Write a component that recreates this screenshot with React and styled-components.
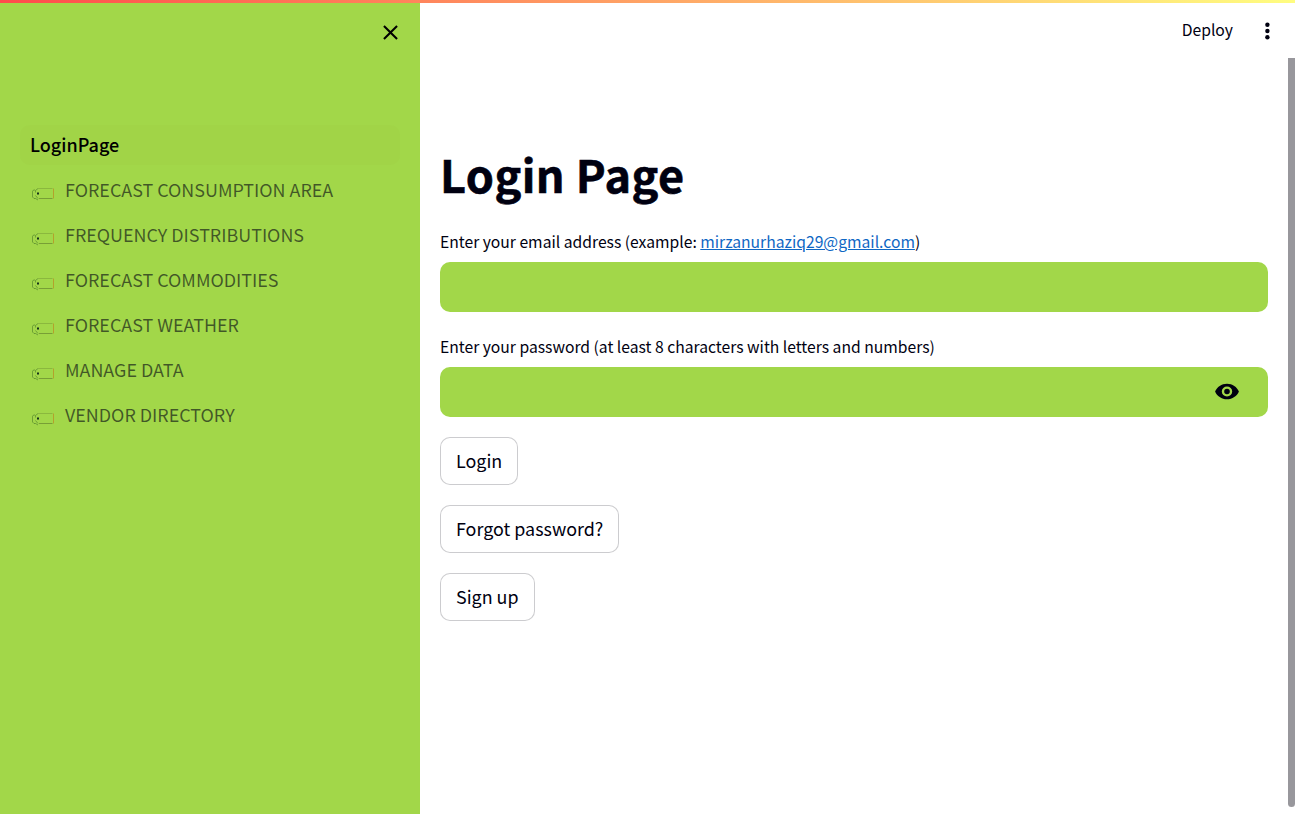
import React from "react";
import styled, { createGlobalStyle } from "styled-components";

const GlobalStyle = createGlobalStyle`
  * { box-sizing: border-box; }
  body {
    margin: 0;
    background: #fff;
    color: #000010;
    font-family: "Noto Sans CJK SC", "Noto Sans", sans-serif;
    overflow: hidden;
  }
`;

const lime = "#a2d749";

const Page = styled.div`
  display: flex;
  flex-direction: column;
  height: 814px;
`;

const Decoration = styled.div`
  flex: none;
  height: 3px;
  background: linear-gradient(90deg, rgb(255, 75, 75), rgb(255, 253, 128));
`;

const Columns = styled.div`
  flex: 1;
  display: flex;
  min-height: 0;
`;

const Sidebar = styled.aside`
  width: 420px;
  flex: none;
  background: ${lime};
`;

const SidebarHeader = styled.div`
  display: flex;
  justify-content: flex-end;
  height: 122px;
  padding: 17px 17px 0 0;
`;

const CloseButton = styled.button`
  border: 0;
  padding: 0;
  width: 25px;
  height: 25px;
  background: none;
  color: #000;
`;

const NavList = styled.nav`
  display: flex;
  flex-direction: column;
  gap: 5px;
  padding: 0 20px;
`;

const NavItem = styled.a`
  display: flex;
  align-items: center;
  gap: 10px;
  height: 40px;
  padding: 0 10px 2px;
  border-radius: 10px;
  font-size: ${(p) => (p.$active ? 18 : 17.92)}px;
  line-height: 38px;
  white-space: nowrap;
  font-weight: ${(p) => (p.$active ? 500 : 400)};
  color: ${(p) => (p.$active ? "#000" : "rgba(0, 0, 16, 0.6)")};
  background: ${(p) => (p.$active ? "rgba(151, 166, 50, 0.06)" : "transparent")};
`;

const NavIcon = styled.svg`
  flex: none;
  width: 25px;
  height: 20px;
  margin-top: 9px;
`;

const Main = styled.main`
  flex: 1;
  display: flex;
  flex-direction: column;
  min-width: 0;
`;

const Toolbar = styled.header`
  flex: none;
  display: flex;
  justify-content: flex-end;
  align-items: center;
  gap: 23px;
  height: 55px;
  padding: 0 17px 0 0;
  font-size: 15.7px;
`;

const DeployLabel = styled.span`
  padding-bottom: 2px;
`;

const MenuIcon = styled.svg`
  width: 22px;
  height: 22px;
  display: block;
`;

const ScrollArea = styled.div`
  flex: 1;
  display: flex;
  min-height: 0;
`;

const Content = styled.section`
  flex: 1;
  display: flex;
  flex-direction: column;
  align-items: flex-start;
  padding: 86px 20px 0 20px;
`;

const ScrollThumb = styled.div`
  width: 7px;
  height: 749px;
  background: #98979c;
  border-radius: 0 0 4px 4px;
`;

const Title = styled.h1`
  margin: 0;
  height: 60px;
  line-height: 60px;
  font-size: 45px;
  letter-spacing: 0.45px;
  font-weight: 700;
  -webkit-text-stroke: 0.6px currentColor;
`;

const Field = styled.div`
  width: 100%;
  display: flex;
  flex-direction: column;
  margin-top: ${(p) => p.$top}px;
`;

const Label = styled.label`
  height: 30px;
  line-height: 30px;
  margin-bottom: 5px;
  font-size: 15.68px;
  white-space: nowrap;

  a { color: #0f67c4; text-decoration: underline; }
`;

const InputBox = styled.div`
  display: flex;
  align-items: center;
  justify-content: flex-end;
  height: 50px;
  padding: 0 28px 1px 0;
  border-radius: 10px;
  background: ${lime};
`;

const EyeIcon = styled.svg`
  width: 26px;
  height: 25px;
`;

const Buttons = styled.div`
  display: flex;
  flex-direction: column;
  align-items: flex-start;
  gap: 20px;
  margin-top: 20px;
`;

const Button = styled.button`
  height: 48px;
  padding: 0 15px 2px;
  border: 1px solid rgba(0, 0, 16, 0.2);
  border-radius: 10px;
  background: #fff;
  color: inherit;
  font-family: inherit;
  font-size: 17.9px;
  line-height: 44px;
`;

const Tag = () => (
  <NavIcon viewBox="0 0 25 20" fill="none">
    <path d="M8 4.5H22.5" stroke="#000" strokeOpacity=".14" />
    <path d="M9 14.5H22.5" stroke="#000" strokeOpacity=".26" />
    <path d="M23.5 4.5V14.5" stroke="#c36b10" strokeOpacity=".5" />
    <path d="M8 4.5L5.5 6.5V8.5M5.5 11.5L8 14.5M5 6H3.5L2.5 7.5V13L4 14.5H5.5L8 16" stroke="#20501a" strokeOpacity=".4" />
    <rect x="7" y="8.5" width="2" height="2" fill="#14301a" />
  </NavIcon>
);

const pages = [
  "FORECAST CONSUMPTION AREA",
  "FREQUENCY DISTRIBUTIONS",
  "FORECAST COMMODITIES",
  "FORECAST WEATHER",
  "MANAGE DATA",
  "VENDOR DIRECTORY",
];

export default function App() {
  return (
    <>
      <GlobalStyle />
      <Page>
        <Decoration />
        <Columns>
          <Sidebar>
            <SidebarHeader>
              <CloseButton aria-label="Close">
                <svg width="25" height="25" viewBox="0 0 24 24" fill="currentColor">
                  <path d="M19 6.41 17.59 5 12 10.59 6.41 5 5 6.41 10.59 12 5 17.59 6.41 19 12 13.41 17.59 19 19 17.59 13.41 12z" />
                </svg>
              </CloseButton>
            </SidebarHeader>
            <NavList>
              <NavItem $active>LoginPage</NavItem>
              {pages.map((page) => (
                <NavItem key={page}>
                  <Tag />
                  <span>{page}</span>
                </NavItem>
              ))}
            </NavList>
          </Sidebar>
          <Main>
            <Toolbar>
              <DeployLabel>Deploy</DeployLabel>
              <MenuIcon viewBox="0 0 22 22" fill="#000010">
                <circle cx="11.4" cy="4.8" r="2.2" />
                <circle cx="11.4" cy="11" r="2.2" />
                <circle cx="11.4" cy="17.2" r="2.2" />
              </MenuIcon>
            </Toolbar>
            <ScrollArea>
              <Content>
                <Title>Login Page</Title>
                <Field $top={23}>
                  <Label>
                    Enter your email address (example: <a>mirzanurhaziq29@gmail.com</a>)
                  </Label>
                  <InputBox />
                </Field>
                <Field $top={20}>
                  <Label>Enter your password (at least 8 characters with letters and numbers)</Label>
                  <InputBox>
                    <EyeIcon viewBox="0 0 24 24" preserveAspectRatio="none" fill="#000010">
                      <path d="M12 4.5C7 4.5 2.73 7.61 1 12c1.73 4.39 6 7.5 11 7.5s9.27-3.11 11-7.5c-1.73-4.39-6-7.5-11-7.5zM12 16.8a4.8 4.8 0 1 1 0-9.6 4.8 4.8 0 0 1 0 9.6zm0-7.4a2.6 2.6 0 1 0 0 5.2 2.6 2.6 0 0 0 0-5.2z" />
                    </EyeIcon>
                  </InputBox>
                </Field>
                <Buttons>
                  <Button>Login</Button>
                  <Button>Forgot password?</Button>
                  <Button>Sign up</Button>
                </Buttons>
              </Content>
              <ScrollThumb />
            </ScrollArea>
          </Main>
        </Columns>
      </Page>
    </>
  );
}
